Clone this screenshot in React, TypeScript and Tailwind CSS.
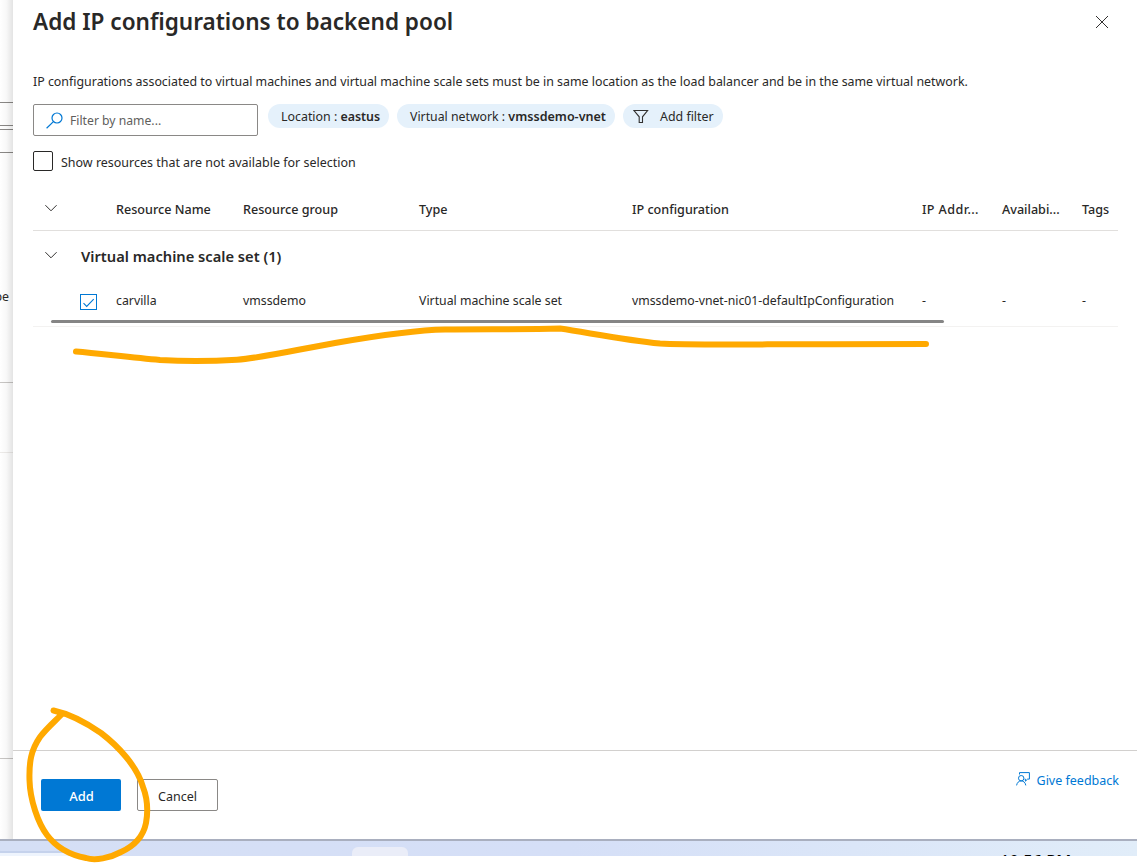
import type { ReactNode } from "react";

const columns = ["", "Resource Name", "Resource group", "Type", "IP configuration", "IP Addr...", "Availabi...", "Tags"];
const gridCols = "grid grid-cols-[83px_127px_176px_213px_290px_80px_80px_36px]";

function Chevron() {
  return (
    <svg className="h-3 w-3.5" viewBox="0 0 14 12" fill="none" stroke="#323130" strokeWidth="1">
      <path d="M1.4 3.2 7 8.8l5.6-5.6" />
    </svg>
  );
}

function Pill({ children, className }: { children: ReactNode; className: string }) {
  return (
    <button className={`flex h-6 items-center rounded-full bg-[#e5f1fb] whitespace-pre ${className}`}>{children}</button>
  );
}

function BackgroundStrip() {
  return (
    <div className="relative flex w-[13px] shrink-0 flex-col overflow-hidden">
      <div className="mt-[102px] h-6 shrink-0 border-y border-[#8a8886]" />
      <div className="mt-[3px] h-6 shrink-0 border-y border-[#8a8886]" />
      <div className="mt-[134px] flex h-5 shrink-0 justify-end pr-1 text-[12.4px] leading-5">pe</div>
      <div className="mt-[75px] h-px shrink-0 bg-[#c8c6c4]" />
      <div className="mt-[69px] h-px shrink-0 bg-[#edebe9]" />
      <div className="mt-[305px] h-px shrink-0 bg-[#c8c6c4]" />
      <div className="absolute inset-0 bg-linear-to-r from-black/0 via-black/3 to-black/11" />
    </div>
  );
}

function Table() {
  return (
    <div className="mt-[17px] w-[1085px]">
      <div className={`${gridCols} h-[43px] items-center border-b border-[#e1dfdd] text-[12.6px] font-medium`}>
        {columns.map((c, i) => (
          <div key={i} className={i === 5 ? "pt-[3px] tracking-[0.4px] whitespace-nowrap" : "pt-[3px] whitespace-nowrap"}>
            {i === 0 ? <div className="pb-1.5 pl-[11px]"><Chevron /></div> : c}
          </div>
        ))}
      </div>
      <div className="flex h-[50px] items-center pl-[11px]">
        <div className="pb-[3px]"><Chevron /></div>
        <h2 className="ml-[23px] text-[14.7px] font-semibold">Virtual machine scale set (1)</h2>
      </div>
      <div className="flex h-[46px] flex-col border-b border-[#f3f2f1]">
        <div className={`${gridCols} h-[39px] items-center whitespace-nowrap text-[12.3px]`}>
          <div className="pt-[3px] pl-[47px]">
            <div className="flex h-4 w-[17px] items-center justify-center border border-[#0078d4]">
              <svg className="h-[13px] w-[13px]" viewBox="0 0 13 13" fill="none" stroke="#0078d4" strokeWidth="1.1">
                <path d="m1.5 7.2 3.2 3.2 7-7.2" />
              </svg>
            </div>
          </div>
          <div className="pt-0.5">carvilla</div>
          <div className="pt-0.5">vmssdemo</div>
          <div className="pt-0.5">Virtual machine scale set</div>
          <div className="pt-0.5 text-[12.25px]">vmssdemo-vnet-nic01-defaultIpConfiguration</div>
          <div className="pt-0.5">-</div>
          <div className="pt-0.5">-</div>
          <div className="pt-0.5">-</div>
        </div>
        <div className="ml-[18px] h-[3px] w-[893px] shrink-0 rounded-full bg-[#858585]" />
      </div>
    </div>
  );
}

function Markup() {
  return (
    <svg className="pointer-events-none absolute inset-0 h-[865px] w-[1137px]" viewBox="0 0 1137 865" fill="none" stroke="#ffa900" strokeWidth="6" strokeLinecap="round" strokeLinejoin="round">
      <path d="M76 351.500C100 353.500 130 357.500 160 360C185 361.300 215 361 237 359.700C265 357.500 300 349 335 343C375 336 412 330 445 329.500C485 329 525 329.500 560 328.500C590 333 625 340 660 343.500C690 345.500 740 344 926 344" />
      <path d="M53.500 710.500C70 714 88 724 101 733C118 746 137 766 143 787C148 800 148 812 146 823C143 838 132 847 121 852C110 858 95 861 86 858C70 855 56 847 47 835C38 823 30 800 29.500 780C29 762 31 750 40 737C46 729 54 722 61 715" />
    </svg>
  );
}

export default function App() {
  return (
    <div className="relative flex h-[865px] w-[1137px] flex-col overflow-hidden bg-white font-['Noto_Sans',sans-serif] text-[12.4px] text-[#292827]">
      <div className="flex h-[839px] shrink-0">
        <BackgroundStrip />
        <main className="flex flex-1 flex-col bg-white">
          <div className="flex h-[750px] flex-col pl-5">
            <header className="flex h-11 items-center justify-between pr-7">
              <h1 className="text-[22.55px] leading-[30px] font-semibold">Add IP configurations to backend pool</h1>
              <svg className="h-3.5 w-3.5" viewBox="0 0 14 14" stroke="#323130" strokeWidth="1">
                <path d="m1 1 12 12M13 1 1 13" />
              </svg>
            </header>
            <p className="mt-7 text-[12.4px] leading-5 whitespace-nowrap">
              IP configurations associated to virtual machines and virtual machine scale sets must be in same location as the load balancer and be in the same virtual network.
            </p>
            <div className="mt-3 flex h-8">
              <div className="flex w-[225px] items-center rounded-xs border border-[#8a8886] pl-3 text-[12.2px] text-[#605e5c]">
                <svg className="mr-[7px] h-[17px] w-[17px]" viewBox="0 0 17 17" fill="none" stroke="#0078d4" strokeWidth="1.2">
                  <circle cx="11" cy="6" r="5" />
                  <path d="M7.400 9.600.6 16.300" />
                </svg>
                <span className="pt-0.5">Filter by name...</span>
              </div>
              <Pill className="ml-2.5 w-[121px] pt-0.5 pl-[13px]">
                <span>Location : </span>
                <span className="font-semibold">eastus</span>
              </Pill>
              <Pill className="ml-2 w-[218px] pt-0.5 pl-[13px] text-[12.3px]">
                <span>Virtual network : </span>
                <span className="text-[12.55px] font-semibold">vmssdemo-vnet</span>
              </Pill>
              <Pill className="ml-2 w-[100px] pl-2.5">
                <svg className="mr-[11px] h-[15px] w-4" viewBox="0 0 16 15" fill="none" stroke="#323130" strokeWidth="1.1">
                  <path d="M1 1.500h13.600L9.500 7.800v5.700H6.200V7.800z" />
                </svg>
                <span className="pt-0.5">Add filter</span>
              </Pill>
            </div>
            <label className="mt-[15px] flex h-5 items-center">
              <span className="h-5 w-5 rounded-xs border border-[#292827]" />
              <span className="ml-2 pt-1 text-[12.48px]">Show resources that are not available for selection</span>
            </label>
            <Table />
          </div>
          <footer className="flex flex-1 border-t border-[#d2d0ce] pt-7 pr-[18px] pl-7">
            <button className="h-8 w-20 rounded-xs bg-[#0078d4] pt-[3px] pl-px text-[13px] font-medium text-white">Add</button>
            <button className="ml-4 h-8 w-[81px] rounded-xs border border-[#8a8886] pt-1 text-[12.5px]">Cancel</button>
            <a className="ml-auto flex h-5 -translate-y-[9px] items-center text-[#0078d4]">
              <svg className="mr-[7px] mb-0.5 h-3.5 w-3.5" viewBox="0 0 14 14" fill="none" stroke="#0078d4" strokeWidth="1">
                <path d="M3.500 2.500V.6h9.900v6.500h-1.800L9.400 9.200V7.100H8.600" />
                <circle cx="5.200" cy="6.200" r="2.700" />
                <path d="M.6 13.400c.4-2.700 2.200-4.500 4.600-4.500s4.200 1.800 4.600 4.500" />
              </svg>
              <span className="pt-0.5 text-[12.5px]">Give feedback</span>
            </a>
          </footer>
        </main>
      </div>
      <div className="relative flex h-[17px] shrink-0 overflow-hidden border-t-2 border-[#a9afbf] bg-linear-to-r from-[#d5dff5] via-[#d5dff7] to-[#e1edf9]">
        <div className="mt-[10px] h-1.5 w-[68px] border-t-2 border-[#c5d2ec] bg-[#eef4fd]" />
        <div className="mt-1.5 ml-[284px] h-5 w-14 rounded-md bg-[#eaedf8]" />
        <div className="mt-2.5 ml-[592px] text-[16.4px] leading-5 font-medium whitespace-nowrap text-black">10:56 PM</div>
      </div>
      <Markup />
    </div>
  );
}
